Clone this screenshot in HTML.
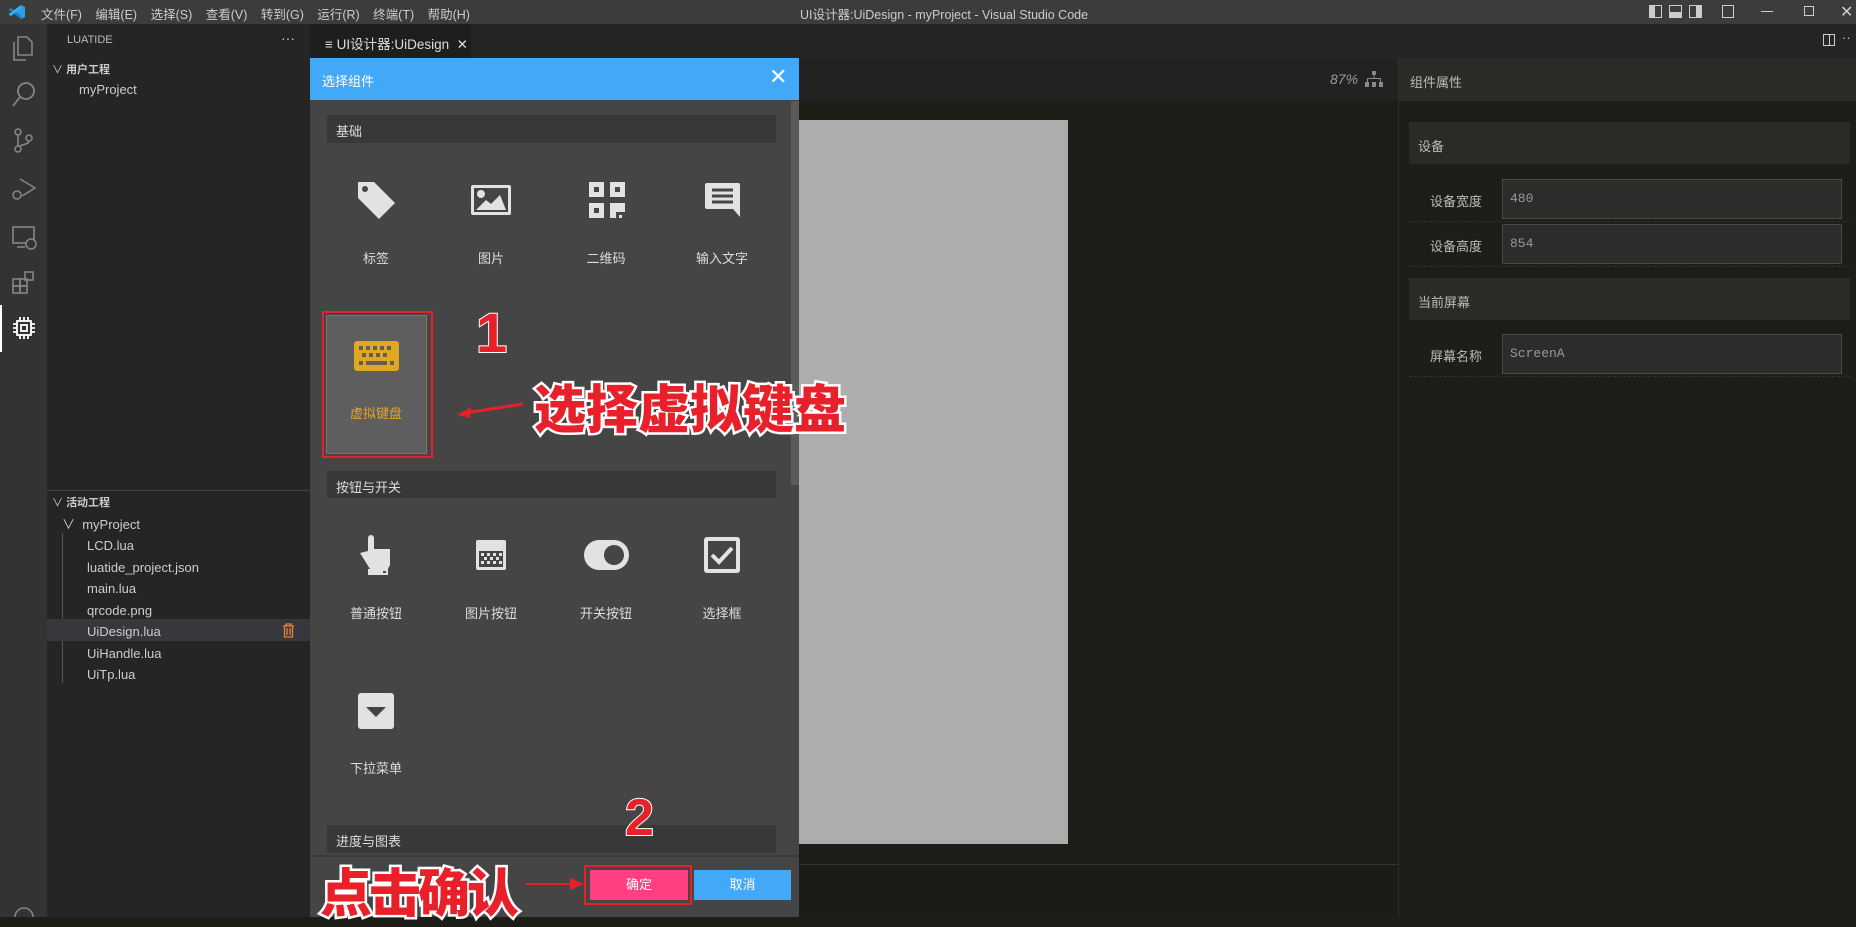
<!DOCTYPE html>
<html><head><meta charset="utf-8"><style>
*{margin:0;padding:0;box-sizing:border-box}
body{width:1856px;height:917px;overflow:hidden;background:#1e1e18;font-family:"Liberation Sans","Noto Sans CJK SC",sans-serif;font-size:13px;color:#ccc;position:relative}
.a{position:absolute}
.t{white-space:nowrap}
</style></head><body>
<!-- title bar -->
<div class="a" style="left:0;top:0;width:1856px;height:24px;background:#3c3c3c"></div>
<svg class="a" style="left:8px;top:4px" width="18" height="16" viewBox="0 0 18 16"><path d="M13 1 L17 3 V13 L13 15 L4 8 Z" fill="#2d9ee8"/><path d="M1 5 L3 4 L13 12 V15 L1 6Z" fill="#1a7fc9"/><path d="M1 11 L3 12 L13 4 V1 L1 10Z" fill="#3ab0f5"/></svg>
<div class="a t" style="left:41px;top:4px;font-size:12.5px;color:#ccc;word-spacing:10px">文件(F) 编辑(E) 选择(S) 查看(V) 转到(G) 运行(R) 终端(T) 帮助(H)</div>
<div class="a t" style="left:800px;top:4px;font-size:12.5px;color:#ccc">UI设计器:UiDesign - myProject - Visual Studio Code</div>
<div class="a" style="left:1649px;top:5px;width:13px;height:13px;border:1px solid #ccc;border-left:6px solid #ccc"></div>
<div class="a" style="left:1669px;top:5px;width:13px;height:13px;border:1px solid #ccc;border-bottom:6px solid #ccc"></div>
<div class="a" style="left:1689px;top:5px;width:13px;height:13px;border:1px solid #ccc;border-right:6px solid #ccc"></div>
<div class="a" style="left:1722px;top:5px;width:12px;height:13px;border:1px solid #ccc"></div>
<div class="a" style="left:1761px;top:11px;width:12px;height:1px;background:#ccc"></div>
<div class="a" style="left:1804px;top:6px;width:10px;height:10px;border:1px solid #ccc"></div>
<div class="a t" style="left:1840px;top:2px;font-size:16px;color:#ccc">✕</div>

<!-- activity bar -->
<div class="a" style="left:0;top:24px;width:47px;height:893px;background:#333"></div>
<svg class="a" style="left:10px;top:33px" width="26" height="30" viewBox="0 0 26 30" fill="none" stroke="#858585" stroke-width="1.6"><path d="M8 4 H17 L22 9 V22 H8Z"/><path d="M4 9 V27 H16"/></svg>
<svg class="a" style="left:11px;top:81px" width="26" height="28" viewBox="0 0 26 28" fill="none" stroke="#858585" stroke-width="1.8"><circle cx="15" cy="10" r="8"/><path d="M9 16 L2 25"/></svg>
<svg class="a" style="left:12px;top:128px" width="22" height="26" viewBox="0 0 22 26" fill="none" stroke="#858585" stroke-width="1.6"><circle cx="6" cy="4" r="3"/><circle cx="6" cy="21" r="3"/><circle cx="17" cy="10" r="3"/><path d="M6 7 V18 M17 13 C17 17 8 16 7 19"/></svg>
<svg class="a" style="left:11px;top:176px" width="26" height="26" viewBox="0 0 26 26" fill="none" stroke="#858585" stroke-width="1.6"><path d="M9 3 L24 12 L11 20"/><circle cx="6" cy="19" r="4"/></svg>
<svg class="a" style="left:11px;top:225px" width="26" height="26" viewBox="0 0 26 26" fill="none" stroke="#858585" stroke-width="1.6"><rect x="2" y="2" width="21" height="16"/><path d="M6 22 H14"/><circle cx="20" cy="19" r="5" fill="#333"/></svg>
<svg class="a" style="left:11px;top:270px" width="26" height="26" viewBox="0 0 26 26" fill="none" stroke="#858585" stroke-width="1.6"><rect x="2" y="9" width="7" height="7"/><rect x="9" y="9" width="7" height="7"/><rect x="2" y="16" width="7" height="7"/><rect x="9" y="16" width="7" height="7"/><rect x="14" y="2" width="8" height="8"/></svg>
<div class="a" style="left:0;top:305px;width:2px;height:47px;background:#fff"></div>
<svg class="a" style="left:12px;top:316px" width="24" height="24" viewBox="0 0 24 24" fill="none" stroke="#fff" stroke-width="1.8"><rect x="5" y="5" width="14" height="14"/><rect x="9" y="9" width="6" height="6"/><path d="M8 1V5M12 1V5M16 1V5M8 19V23M12 19V23M16 19V23M1 8H5M1 12H5M1 16H5M19 8H23M19 12H23M19 16H23"/></svg>
<svg class="a" style="left:12px;top:905px" width="24" height="12"><circle cx="12" cy="12" r="9" fill="none" stroke="#858585" stroke-width="1.6"/></svg>

<!-- sidebar -->
<div class="a" style="left:47px;top:24px;width:263px;height:893px;background:#252526"></div>
<div class="a t" style="left:67px;top:34px;font-size:11px;color:#bbb">LUATIDE</div>
<div class="a t" style="left:281px;top:30px;font-size:14px;color:#ccc">···</div>
<div class="a t" style="left:52px;top:61px;font-size:11px;color:#ccc">∨ <b>用户工程</b></div>
<div class="a t" style="left:79px;top:82px;color:#ccc">myProject</div>
<div class="a" style="left:47px;top:490px;width:263px;height:1px;background:#444"></div>
<div class="a t" style="left:52px;top:494px;font-size:11px;color:#ccc">∨ <b>活动工程</b></div>
<div class="a t" style="left:62px;top:514px;color:#ccc">∨&nbsp; myProject</div>
<div class="a" style="left:62px;top:533px;width:1px;height:150px;background:#555"></div>
<div class="a" style="left:47px;top:619px;width:263px;height:22px;background:#37373d"></div>
<div class="a t" style="left:87px;top:535px;color:#ccc;line-height:21.5px">LCD.lua<br>luatide_project.json<br>main.lua<br>qrcode.png<br>UiDesign.lua<br>UiHandle.lua<br>UiTp.lua</div>
<svg class="a" style="left:282px;top:623px" width="13" height="15" viewBox="0 0 13 15" fill="none" stroke="#e8843c" stroke-width="1.3"><path d="M1 3H12M4 3V1H9V3M2.5 3V14H10.5V3M5 5V12M8 5V12"/></svg>

<!-- tab bar -->
<div class="a" style="left:310px;top:24px;width:1546px;height:34px;background:#252526"></div>
<div class="a" style="left:310px;top:24px;width:161px;height:34px;background:#1e1e1e"></div>
<div class="a t" style="left:325px;top:33px;color:#ddd;font-size:13.5px">≡ UI设计器:UiDesign&nbsp; ✕</div>
<div class="a" style="left:1823px;top:34px;width:12px;height:12px;border:1px solid #ccc"></div>
<div class="a" style="left:1829px;top:34px;width:1px;height:12px;background:#ccc"></div>
<div class="a t" style="left:1842px;top:30px;color:#ccc">··</div>

<!-- editor toolbar -->
<div class="a" style="left:799px;top:58px;width:599px;height:43px;background:#222221"></div>
<div class="a t" style="left:1330px;top:71px;font-style:italic;color:#999;font-size:14px">87%</div>
<svg class="a" style="left:1365px;top:71px" width="18" height="16" viewBox="0 0 18 16" fill="#888"><rect x="7" y="0" width="4" height="4"/><rect x="0" y="11" width="4" height="5"/><rect x="7" y="11" width="4" height="5"/><rect x="14" y="11" width="4" height="5"/><path d="M2 11V7H16V11H15V8H3V11ZM8.5 4H9.5V8H8.5Z"/></svg>
<div class="a" style="left:799px;top:120px;width:269px;height:724px;background:#adadad"></div>
<div class="a" style="left:675px;top:864px;width:723px;height:53px;background:#1b1b17;border-top:1px solid #333"></div>

<!-- right panel -->
<div class="a" style="left:1398px;top:58px;width:458px;height:859px;background:#1e1e18;border-left:1px solid #2e2e2a"></div>
<div class="a" style="left:1399px;top:58px;width:457px;height:43px;background:#2a2a26"></div>
<div class="a t" style="left:1410px;top:72px;color:#bbb">组件属性</div>
<div class="a" style="left:1409px;top:122px;width:441px;height:42px;background:#2a2a26"></div>
<div class="a t" style="left:1418px;top:136px;color:#bbb">设备</div>
<div class="a t" style="left:1430px;top:191px;color:#bbb">设备宽度</div>
<div class="a" style="left:1502px;top:179px;width:340px;height:40px;background:#2c2c2a;border:1px solid #484848"></div>
<div class="a t" style="left:1510px;top:191px;color:#999;font-family:'Liberation Mono',monospace">480</div>
<div class="a" style="left:1409px;top:221px;width:441px;border-top:1px dashed #333"></div>
<div class="a t" style="left:1430px;top:236px;color:#bbb">设备高度</div>
<div class="a" style="left:1502px;top:224px;width:340px;height:40px;background:#2c2c2a;border:1px solid #484848"></div>
<div class="a t" style="left:1510px;top:236px;color:#999;font-family:'Liberation Mono',monospace">854</div>
<div class="a" style="left:1409px;top:266px;width:441px;border-top:1px dashed #333"></div>
<div class="a" style="left:1409px;top:278px;width:441px;height:42px;background:#2a2a26"></div>
<div class="a t" style="left:1418px;top:292px;color:#bbb">当前屏幕</div>
<div class="a t" style="left:1430px;top:346px;color:#bbb">屏幕名称</div>
<div class="a" style="left:1502px;top:334px;width:340px;height:40px;background:#2c2c2a;border:1px solid #484848"></div>
<div class="a t" style="left:1510px;top:346px;color:#999;font-family:'Liberation Mono',monospace">ScreenA</div>
<div class="a" style="left:1409px;top:376px;width:441px;border-top:1px dashed #333"></div>

<!-- dialog -->
<div class="a" style="left:310px;top:58px;width:489px;height:859px;background:#454545"></div>
<div class="a" style="left:310px;top:58px;width:489px;height:42px;background:#42a8f8"></div>
<div class="a t" style="left:322px;top:71px;color:#fff">选择组件</div>
<div class="a t" style="left:769px;top:64px;color:#fff;font-size:22px">✕</div>
<div class="a" style="left:791px;top:101px;width:8px;height:384px;background:#5a5a5a"></div>
<div class="a" style="left:327px;top:115px;width:449px;height:28px;background:#383838"></div>
<div class="a t" style="left:336px;top:121px;color:#ddd">基础</div>

<!-- row1 icons -->
<svg class="a" style="left:356px;top:180px" width="40" height="40" viewBox="0 0 40 40" fill="#e2e2e2"><path d="M2 2 H18 L39 23 L23 39 L2 18Z"/><circle cx="9" cy="9" r="3" fill="#454545"/></svg>
<svg class="a" style="left:471px;top:185px" width="40" height="30" viewBox="0 0 40 30"><rect x="0" y="0" width="40" height="30" rx="2" fill="#e2e2e2"/><rect x="3" y="3" width="34" height="24" fill="#454545"/><circle cx="10" cy="9" r="4" fill="#e2e2e2"/><path d="M5 25 L15 15 L20 19 L29 10 L35 25Z" fill="#e2e2e2"/></svg>
<svg class="a" style="left:589px;top:182px" width="36" height="36" viewBox="0 0 36 36" fill="#e2e2e2"><rect x="0" y="0" width="15" height="15"/><rect x="21" y="0" width="15" height="15"/><rect x="0" y="21" width="15" height="15"/><rect x="21" y="21" width="6" height="15"/><rect x="27" y="21" width="9" height="9"/><rect x="30" y="33" width="3" height="3"/><g fill="#454545"><rect x="5" y="5" width="5" height="5"/><rect x="26" y="5" width="5" height="5"/><rect x="5" y="26" width="5" height="5"/></g></svg>
<svg class="a" style="left:705px;top:183px" width="35" height="34" viewBox="0 0 35 34"><path d="M0 2 Q0 0 2 0 H33 Q35 0 35 2 V34 L28 26 H2 Q0 26 0 24Z" fill="#e2e2e2"/><path d="M7 7H28M7 13H28M7 19H28" stroke="#454545" stroke-width="3"/></svg>
<div class="a t" style="left:356px;top:248px;width:40px;text-align:center;color:#ddd">标签</div>
<div class="a t" style="left:471px;top:248px;width:40px;text-align:center;color:#ddd">图片</div>
<div class="a t" style="left:576px;top:248px;width:60px;text-align:center;color:#ddd">二维码</div>
<div class="a t" style="left:687px;top:248px;width:70px;text-align:center;color:#ddd">输入文字</div>

<!-- selected -->
<div class="a" style="left:322px;top:311px;width:111px;height:147px;border:2px solid #e8202a"></div>
<div class="a" style="left:326px;top:315px;width:101px;height:139px;background:#5e5e5e;border:1px dotted #b09030"></div>
<svg class="a" style="left:354px;top:341px" width="45" height="30" viewBox="0 0 45 30"><rect width="45" height="30" rx="3" fill="#e0a820"/><g fill="#5e5e5e"><rect x="5" y="5" width="4" height="4"/><rect x="12" y="5" width="4" height="4"/><rect x="19" y="5" width="4" height="4"/><rect x="26" y="5" width="4" height="4"/><rect x="33" y="5" width="4" height="4"/><rect x="8" y="12" width="4" height="4"/><rect x="15" y="12" width="4" height="4"/><rect x="22" y="12" width="4" height="4"/><rect x="29" y="12" width="4" height="4"/><rect x="5" y="20" width="4" height="4"/><rect x="12" y="20" width="21" height="4"/><rect x="36" y="20" width="4" height="4"/></g></svg>
<div class="a t" style="left:336px;top:403px;width:80px;text-align:center;color:#e0a820">虚拟键盘</div>
<div class="a t" style="left:476px;top:300px;font-size:56px;font-weight:bold;color:#e8202a;-webkit-text-stroke:2px #fff;paint-order:stroke fill">1</div>
<svg class="a" style="left:455px;top:400px" width="70" height="20"><path d="M68 4 L10 13" stroke="#e8202a" stroke-width="3"/><path d="M2 15 L16 7 L15 18Z" fill="#e8202a"/></svg>
<div class="a t" style="left:534px;top:368px;font-size:52px;font-weight:900;color:#e8202a;-webkit-text-stroke:5px #fff;paint-order:stroke fill;font-family:'Noto Sans CJK SC',sans-serif;letter-spacing:0px">选择虚拟键盘</div>

<div class="a" style="left:327px;top:471px;width:449px;height:27px;background:#383838"></div>
<div class="a t" style="left:336px;top:477px;color:#ddd">按钮与开关</div>
<!-- row2 icons -->
<svg class="a" style="left:360px;top:535px" width="32" height="40" viewBox="0 0 32 40" fill="#e2e2e2"><rect x="8" y="0" width="6" height="20" rx="3"/><path d="M0 18 L8 16 V14 H30 V30 L28 34 H10 Z"/><rect x="8" y="34" width="20" height="6"/><rect x="23" y="36" width="3" height="2" fill="#454545"/></svg>
<svg class="a" style="left:476px;top:540px" width="30" height="30" viewBox="0 0 30 30"><rect width="30" height="30" rx="2" fill="#e2e2e2"/><rect x="3" y="3" width="24" height="24" fill="#454545"/><rect x="3" y="3" width="24" height="8" fill="#e2e2e2"/><g fill="#e2e2e2"><rect x="5" y="13" width="3" height="3"/><rect x="11" y="13" width="3" height="3"/><rect x="17" y="13" width="3" height="3"/><rect x="23" y="13" width="3" height="3"/><rect x="8" y="17" width="3" height="3"/><rect x="14" y="17" width="3" height="3"/><rect x="20" y="17" width="3" height="3"/><rect x="5" y="21" width="3" height="3"/><rect x="11" y="21" width="3" height="3"/><rect x="17" y="21" width="3" height="3"/><rect x="23" y="21" width="3" height="3"/></g></svg>
<svg class="a" style="left:584px;top:540px" width="45" height="30" viewBox="0 0 45 30"><rect width="45" height="30" rx="15" fill="#e2e2e2"/><circle cx="30" cy="15" r="10" fill="#454545"/></svg>
<svg class="a" style="left:704px;top:537px" width="36" height="36" viewBox="0 0 36 36"><rect width="36" height="36" rx="3" fill="#e2e2e2"/><rect x="4" y="4" width="28" height="28" fill="#454545"/><path d="M8 18 L15 25 L28 11" fill="none" stroke="#e2e2e2" stroke-width="4"/></svg>
<div class="a t" style="left:336px;top:603px;width:80px;text-align:center;color:#ddd">普通按钮</div>
<div class="a t" style="left:451px;top:603px;width:80px;text-align:center;color:#ddd">图片按钮</div>
<div class="a t" style="left:566px;top:603px;width:80px;text-align:center;color:#ddd">开关按钮</div>
<div class="a t" style="left:692px;top:603px;width:60px;text-align:center;color:#ddd">选择框</div>
<svg class="a" style="left:358px;top:693px" width="36" height="36" viewBox="0 0 36 36"><rect width="36" height="36" rx="3" fill="#e2e2e2"/><path d="M8 14 H28 L18 24Z" fill="#454545"/></svg>
<div class="a t" style="left:336px;top:758px;width:80px;text-align:center;color:#ddd">下拉菜单</div>

<div class="a" style="left:327px;top:825px;width:449px;height:28px;background:#383838"></div>
<div class="a t" style="left:336px;top:831px;color:#ddd">进度与图表</div>
<!-- footer -->
<div class="a" style="left:310px;top:855px;width:489px;height:62px;background:#454545;border-top:2px solid #3a3a3a"></div>
<div class="a" style="left:584px;top:865px;width:108px;height:40px;border:2px solid #e8202a"></div>
<div class="a" style="left:590px;top:870px;width:98px;height:30px;background:#ff3f7f;color:#fff;text-align:center;line-height:30px">确定</div>
<div class="a" style="left:694px;top:870px;width:97px;height:30px;background:#42a8f8;color:#fff;text-align:center;line-height:30px">取消</div>
<div class="a t" style="left:625px;top:788px;font-size:52px;font-weight:bold;color:#e8202a;-webkit-text-stroke:2px #fff;paint-order:stroke fill">2</div>
<div class="a t" style="left:320px;top:852px;font-size:52px;font-weight:900;color:#e8202a;-webkit-text-stroke:5px #fff;paint-order:stroke fill;font-family:'Noto Sans CJK SC',sans-serif;letter-spacing:-3px">点击确认</div>
<svg class="a" style="left:526px;top:876px" width="60" height="16"><path d="M0 8 H46" stroke="#e8202a" stroke-width="2"/><path d="M58 8 L44 2 V14Z" fill="#e8202a"/></svg>
</body></html>
